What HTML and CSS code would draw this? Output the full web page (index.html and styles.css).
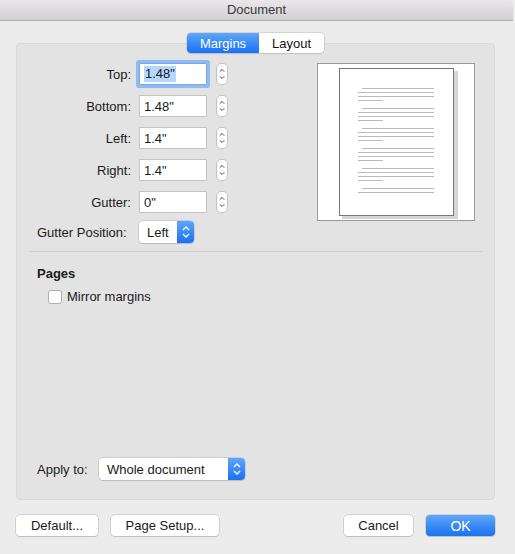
FILE: index.html
```html
<!DOCTYPE html>
<html>
<head>
<meta charset="utf-8">
<link rel="stylesheet" href="styles.css">
</head>
<body>
<div class="window">
  <div class="titlebar">Document</div>
  <div class="content">
    <div class="tabs">
      <span class="tab active">Margins</span><span class="tab">Layout</span>
    </div>
    <div class="panel">
      <div class="top">
        <div class="fields">
          <div class="row"><label>Top:</label><span class="field focus"><span class="sel">1.48"</span></span><span class="stepper"><svg width="11" height="20" viewBox="0 0 11 20"><path d="M3 7.5 L5.5 5 L8 7.5 M3 12.5 L5.5 15 L8 12.5" fill="none" stroke="#333" stroke-width="1"/></svg></span></div>
          <div class="row"><label>Bottom:</label><span class="field">1.48"</span><span class="stepper"><svg width="11" height="20" viewBox="0 0 11 20"><path d="M3 7.5 L5.5 5 L8 7.5 M3 12.5 L5.5 15 L8 12.5" fill="none" stroke="#333" stroke-width="1"/></svg></span></div>
          <div class="row"><label>Left:</label><span class="field">1.4"</span><span class="stepper"><svg width="11" height="20" viewBox="0 0 11 20"><path d="M3 7.5 L5.5 5 L8 7.5 M3 12.5 L5.5 15 L8 12.5" fill="none" stroke="#333" stroke-width="1"/></svg></span></div>
          <div class="row"><label>Right:</label><span class="field">1.4"</span><span class="stepper"><svg width="11" height="20" viewBox="0 0 11 20"><path d="M3 7.5 L5.5 5 L8 7.5 M3 12.5 L5.5 15 L8 12.5" fill="none" stroke="#333" stroke-width="1"/></svg></span></div>
          <div class="row"><label>Gutter:</label><span class="field">0"</span><span class="stepper"><svg width="11" height="20" viewBox="0 0 11 20"><path d="M3 7.5 L5.5 5 L8 7.5 M3 12.5 L5.5 15 L8 12.5" fill="none" stroke="#333" stroke-width="1"/></svg></span></div>
          <div class="row pos"><label>Gutter Position:</label><span class="popup small"><span class="ptext">Left</span><span class="arrows"><svg width="16" height="20" viewBox="0 0 16 20"><path d="M5 8 L8 5 L11 8 M5 12 L8 15 L11 12" fill="none" stroke="#fff" stroke-width="1.3"/></svg></span></span></div>
        </div>
        <div class="preview">
          <svg width="158" height="158" viewBox="0 0 158 158">
            <rect x="0.5" y="0.5" width="157" height="157" fill="#fff" stroke="#999"/>
            <rect x="25" y="8" width="116" height="148" fill="#d6d6d6"/>
            <rect x="22.5" y="5.5" width="114" height="147" fill="#fff" stroke="#777"/>
            <g stroke="#bbb" stroke-width="1">
              <path d="M45 25.5H117 M41 29.5H117 M41 33.5H117 M41 37.5H66"/>
              <path d="M45 45.5H117 M41 49.5H117 M41 53.5H117 M41 57.5H66"/>
              <path d="M45 65.5H117 M41 69.5H117 M41 73.5H117 M41 77.5H66"/>
              <path d="M45 85.5H117 M41 89.5H117 M41 93.5H117 M41 97.5H66"/>
              <path d="M45 105.5H117 M41 109.5H117 M41 113.5H117 M41 117.5H66"/>
              <path d="M45 125.5H117 M41 129.5H117"/>
            </g>
          </svg>
        </div>
      </div>
      <div class="sep"></div>
      <div class="pages">
        <div class="heading">Pages</div>
        <div class="check"><span class="box"></span>Mirror margins</div>
      </div>
      <div class="apply">
        <label>Apply to:</label>
        <span class="popup wide"><span class="ptext">Whole document</span><span class="arrows"><svg width="16" height="20" viewBox="0 0 16 20"><path d="M5 8 L8 5 L11 8 M5 12 L8 15 L11 12" fill="none" stroke="#fff" stroke-width="1.3"/></svg></span></span>
      </div>
    </div>
    <div class="buttons">
      <span class="btn w82">Default...</span>
      <span class="btn w108">Page Setup...</span>
      <span class="spacer"></span>
      <span class="btn w69">Cancel</span>
      <span class="btn primary w69">OK</span>
    </div>
  </div>
</div>
</body>
</html>
```
FILE: styles.css
```css
* { box-sizing: border-box; }
html, body { margin: 0; padding: 0; }
body {
  background: #ececec;
  font-family: "Liberation Sans", Arial, sans-serif;
  font-size: 13px;
  color: #1a1a1a;
  width: 515px;
  height: 554px;
  overflow: hidden;
}
.window {
  width: 513px;
  height: 554px;
  background: #ececec;
  border-top-right-radius: 5px;
  overflow: hidden;
}
.titlebar {
  height: 21px;
  background: linear-gradient(#e9e7e9, #d2d0d2);
  border-bottom: 1px solid #b3b1b3;
  text-align: center;
  line-height: 20px;
  color: #3a3a3a;
  font-size: 13px;
}
.content {
  position: relative;
  padding: 22px 18px 0 16px;
}
.tabs {
  position: absolute;
  top: 12px;
  left: 187px;
  display: flex;
  height: 20px;
  border-radius: 4px;
  box-shadow: 0 0 0 0.5px #b9b9b9, 0 1px 1px rgba(0,0,0,0.12);
  z-index: 2;
  background: #fff;
}
.tab {
  display: flex;
  align-items: center;
  justify-content: center;
  width: 65px;
  height: 20px;
  font-size: 13px;
  color: #111;
}
.tab.active {
  width: 72px;
  background: linear-gradient(#5fa6f8, #1a72f3);
  color: #fff;
  border-radius: 4px 0 0 4px;
}
.panel {
  height: 457px;
  background: #e3e3e3;
  border: 1px solid #dadada;
  border-radius: 4px;
  display: flex;
  flex-direction: column;
}
.top {
  display: flex;
  padding-top: 19px;
  height: 207px;
}
.fields {
  width: 300px;
  display: flex;
  flex-direction: column;
  gap: 10px;
}
.row {
  display: flex;
  align-items: center;
  height: 22px;
}
.row label {
  width: 122px;
  text-align: right;
  padding-right: 8px;
}
.field {
  display: flex;
  align-items: center;
  width: 68px;
  height: 22px;
  background: #fff;
  border: 1px solid #c3c3c3;
  padding-left: 4px;
}
.field.focus {
  box-shadow: 0 0 0 3px #8fbaf2;
  border-color: #7aa7e8;
  border-radius: 1px;
}
.sel {
  background: #b3d7ff;
  padding: 0 1px;
  line-height: 16px;
}
.stepper {
  margin-left: 9px;
  width: 12px;
  height: 22px;
  background: #fff;
  border: 1px solid #c2c2c2;
  border-radius: 5px;
  display: flex;
  align-items: center;
  justify-content: center;
}
.row.pos { margin-top: -2px; }
.row.pos label { width: 122px; padding-right: 0; text-align: left; padding-left: 20px; }
.popup {
  display: flex;
  height: 22px;
  background: #fff;
  border-radius: 4px;
  box-shadow: 0 0 0 0.5px #b5b5b5, 0 1px 1px rgba(0,0,0,0.15);
  overflow: hidden;
}
.popup .ptext {
  flex: 1;
  display: flex;
  align-items: center;
  padding-left: 8px;
}
.popup .arrows {
  width: 17px;
  background: linear-gradient(#5fa6f8, #1a72f3);
  display: flex;
  align-items: center;
  justify-content: center;
}
.popup.small { width: 55px; }
.popup.wide { width: 146px; }
.sep {
  height: 1px;
  background: #cfcfcf;
  margin: 0 12px 0 13px;
}
.pages {
  padding: 14px 0 0 20px;
  flex: 1;
}
.heading {
  font-weight: bold;
  height: 16px;
  line-height: 16px;
}
.check {
  display: flex;
  align-items: center;
  margin-top: 7px;
  margin-left: 11px;
}
.box {
  width: 14px;
  height: 14px;
  background: #fff;
  border: 1px solid #b0b0b0;
  border-radius: 3px;
  margin-right: 5px;
}
.apply {
  display: flex;
  align-items: center;
  padding: 0 0 19px 20px;
  height: 41px;
}
.apply label { width: 62px; }
.buttons {
  display: flex;
  align-items: center;
  margin-top: 15px;
  gap: 13px;
}
.spacer { flex: 1; }
.btn {
  height: 21px;
  display: flex;
  align-items: center;
  justify-content: center;
  background: #fff;
  border-radius: 4px;
  box-shadow: 0 0 0 0.5px #b5b5b5, 0 1px 1px rgba(0,0,0,0.15);
}
.btn.primary {
  background: linear-gradient(#5fa6f8, #1a72f3);
  color: #fff;
  font-size: 14px;
}
.w82 { width: 82px; }
.w108 { width: 108px; }
.w69 { width: 69px; }
```
